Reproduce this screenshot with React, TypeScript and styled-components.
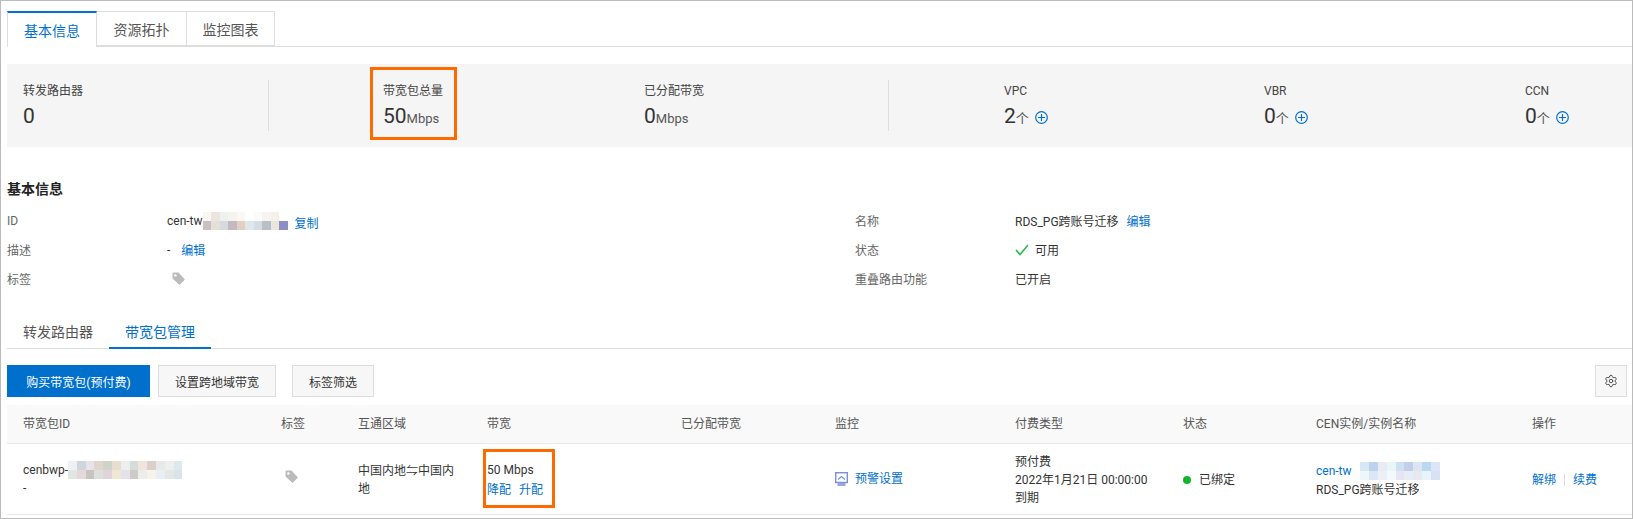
import React from "react";
import styled, { createGlobalStyle } from "styled-components";
import { Settings } from "lucide-react";

const GlobalStyle = createGlobalStyle`
  html, body { margin: 0; padding: 0; background: #fff; }
  body {
    font-family: Roboto, "Noto Sans CJK SC", sans-serif;
    font-size: 12px;
    color: #333;
  }
  * { box-sizing: border-box; }
`;

const Page = styled.div`
  width: 1633px;
  height: 519px;
  overflow: hidden;
  padding: 10px 0 0 6px;
  border: 1px solid #bbb;
`;

const TopTabs = styled.div`
  display: flex;
  height: 36px;
  border-bottom: 1px solid #ddd;
`;

const TopTab = styled.div<{ $active?: boolean; $w: number }>`
  width: ${(p) => p.$w}px;
  height: ${(p) => (p.$active ? 36 : 35)}px;
  display: flex;
  align-items: center;
  justify-content: center;
  font-size: 14px;
  color: ${(p) => (p.$active ? "#0070cc" : "#555")};
  background: #fff;
  border: 1px solid #ddd;
  border-left: ${(p) => (p.$active ? "1px solid #ddd" : "none")};
  border-top: ${(p) => (p.$active ? "2px solid #0070cc" : "1px solid #ddd")};
  border-bottom: ${(p) => (p.$active ? "none" : "1px solid #ddd")};
`;

const StatsPanel = styled.div`
  margin-top: 17px;
  height: 83px;
  background: #f5f5f5;
  display: flex;
  align-items: center;
`;

const StatGroup = styled.div<{ $w: number; $pad: number; $divider?: boolean }>`
  width: ${(p) => p.$w}px;
  height: 51px;
  padding-left: ${(p) => p.$pad}px;
  display: flex;
  border-right: ${(p) => (p.$divider ? "1px solid #ddd" : "none")};
`;

const Stat = styled.div<{ $w: number }>`
  position: relative;
  width: ${(p) => p.$w}px;
  display: flex;
  flex-direction: column;
`;

const StatLabel = styled.div`
  height: 20px;
  margin-top: 1px;
  line-height: 20px;
  color: #444;
`;

const StatValue = styled.div`
  display: flex;
  align-items: baseline;
  height: 28px;
  margin-top: 1px;
  font-size: 21px;
  line-height: 28px;
  color: #333;
`;

const StatUnit = styled.span`
  font-size: 13px;
  color: #555;
`;

const PlusIcon = styled.svg`
  align-self: center;
  margin: 3px 0 0 6px;
`;

const Highlight = styled.div<{ $l: number; $t: number; $w: number; $h: number }>`
  position: absolute;
  left: ${(p) => p.$l}px;
  top: ${(p) => p.$t}px;
  width: ${(p) => p.$w}px;
  height: ${(p) => p.$h}px;
  border: 3px solid #ff6a00;
  pointer-events: none;
`;

const SectionTitle = styled.div`
  margin-top: 32px;
  font-size: 14px;
  font-weight: 700;
  line-height: 20px;
  color: #222;
`;

const InfoGrid = styled.div`
  margin-top: 7px;
  display: grid;
  grid-template-columns: 848px 1fr;
  grid-auto-rows: 29px;
`;

const InfoItem = styled.div`
  display: flex;
  align-items: center;
`;

const InfoLabel = styled.div`
  width: 160px;
  color: #666;
`;

const InfoValue = styled.div<{ $pad?: number }>`
  display: flex;
  align-items: center;
  padding-left: ${(p) => p.$pad ?? 0}px;
  color: #333;
`;

const Link = styled.a<{ $ml?: number; $drop?: number }>`
  color: #0070cc;
  cursor: pointer;
  margin-left: ${(p) => p.$ml ?? 0}px;
  margin-top: ${(p) => p.$drop ?? 0}px;
`;

const Mosaic = styled.div<{ $cols: number; $cell: number; $ml?: number }>`
  display: inline-grid;
  grid-template-columns: repeat(${(p) => p.$cols}, ${(p) => p.$cell}px);
  grid-auto-rows: 9px;
  margin-left: ${(p) => p.$ml ?? 0}px;
`;

const MosaicCell = styled.div<{ $c: string }>`
  background: ${(p) => p.$c};
`;

const SubTabs = styled.div`
  margin-top: 21px;
  height: 35px;
  display: flex;
  border-bottom: 1px solid #ddd;
`;

const SubTab = styled.div<{ $active?: boolean; $w: number }>`
  width: ${(p) => p.$w}px;
  height: 35px;
  padding-bottom: ${(p) => (p.$active ? 0 : 2)}px;
  display: flex;
  align-items: center;
  justify-content: center;
  font-size: 14px;
  color: ${(p) => (p.$active ? "#0070cc" : "#555")};
  border-bottom: ${(p) => (p.$active ? "2px solid #0070cc" : "none")};
`;

const Toolbar = styled.div`
  margin-top: 16px;
  display: flex;
  align-items: center;
  padding-right: 5px;
`;

const Button = styled.button<{ $primary?: boolean; $w: number; $ml?: number }>`
  width: ${(p) => p.$w}px;
  height: 32px;
  margin-left: ${(p) => p.$ml ?? 0}px;
  padding: 0;
  display: flex;
  align-items: center;
  justify-content: center;
  font: inherit;
  color: ${(p) => (p.$primary ? "#fff" : "#333")};
  background: ${(p) => (p.$primary ? "#0070cc" : "#f7f7f7")};
  border: 1px solid ${(p) => (p.$primary ? "#0070cc" : "#ddd")};
`;

const Spacer = styled.div`
  flex: 1;
`;

const COLUMNS = "258px 77px 129px 194px 154px 180px 168px 133px 216px 1fr";

const TableHead = styled.div`
  margin-top: 8px;
  height: 39px;
  display: grid;
  grid-template-columns: ${COLUMNS};
  align-items: center;
  background: #f9f9f9;
  border-bottom: 1px solid #e8e8e8;
  color: #555;
`;

const TableRow = styled.div`
  height: 71px;
  display: grid;
  grid-template-columns: ${COLUMNS};
  align-items: center;
  border-bottom: 1px solid #e8e8e8;
`;

const Cell = styled.div<{ $drop?: number; $pad?: number }>`
  position: relative;
  padding-left: ${(p) => p.$pad ?? 16}px;
  padding-top: ${(p) => p.$drop ?? 0}px;
  line-height: 18px;
`;

const InlineRow = styled.div<{ $gapBelow?: number; $gapAbove?: number }>`
  display: flex;
  align-items: center;
  margin-top: ${(p) => p.$gapAbove ?? 0}px;
  margin-bottom: ${(p) => p.$gapBelow ?? 0}px;
`;

const StatusDot = styled.span`
  width: 8px;
  height: 8px;
  margin-right: 8px;
  border-radius: 50%;
  background: #12b52f;
`;

const OpDivider = styled.span`
  width: 1px;
  height: 12px;
  margin: 0 8px;
  background: #ddd;
`;

const TagIcon = () => (
  <svg width="13" height="13" viewBox="0 0 13 13">
    <path
      d="M0.5 1.5 Q0.5 0.5 1.5 0.5 L6.5 0.5 L12.5 7 Q13 7.6 12.5 8.1 L8 12.5 Q7.5 13 7 12.5 L0.5 6.5 Z"
      fill="#bbb"
    />
    <circle cx="3.4" cy="3.4" r="1.2" fill="#fff" />
  </svg>
);

const Plus = () => (
  <PlusIcon width="13" height="13" viewBox="0 0 13 13" fill="none" stroke="#0070cc" strokeWidth="1.2">
    <circle cx="6.5" cy="6.5" r="5.8" />
    <path d="M6.5 3v7M3 6.5h7" />
  </PlusIcon>
);

const CheckIcon = () => (
  <svg width="14" height="12" viewBox="0 0 14 12" fill="none" stroke="#1fb84a" strokeWidth="1.5" style={{ marginRight: 6 }}>
    <path d="M1 6l4 4.5L13 1" />
  </svg>
);

const MonitorIcon = () => (
  <svg width="13" height="14" viewBox="0 0 13 14" fill="none" style={{ marginRight: 7 }}>
    <rect x="0.7" y="0.7" width="11.6" height="9.8" fill="#fff" stroke="#7a8fd6" strokeWidth="1.4" />
    <path d="M3 7.5l3.5-3L10 7.5" stroke="#7a8fd6" strokeWidth="1.2" />
    <rect x="2.5" y="11" width="8" height="3" fill="#98a8de" />
  </svg>
);

const idMosaic = [
  "#f9f5f3", "#ece4df", "#eef1f0", "#f5f3ef", "#fbf7f5", "#ffffff", "#fafafd", "#f7f3f0", "#f3f1ea", "#ffffff",
  "#ccbfc0", "#e3e0d8", "#d3dcda", "#c6b8c0", "#e2d0c1", "#dce8ec", "#d5dde3", "#b8c0c6", "#ece6da", "#8c8fc4",
];
const bwpMosaic = [
  "#edf0f4", "#d0d5db", "#e8e2e9", "#e0d5ca", "#ced4c9", "#e8ded0", "#edefec", "#d5dcda", "#efe5dc", "#d8d0c9", "#e9e9ea", "#edeeee", "#dde8ee",
  "#e0e7e3", "#e3d8da", "#c8c3c0", "#dcdfdc", "#e0d4da", "#efe6d4", "#e4e1ec", "#cdcbc8", "#edeeec", "#f5f3ec", "#e9eef3", "#e4e6e8", "#d8e4e8",
];
const cenMosaic = [
  "#ffffff", "#d8e6f6", "#bcd3ee", "#e8eaf4", "#e8f6f6", "#d0e0f4", "#c4cde9", "#dce6f2", "#b8d8f4", "#dde6f6",
  "#fafcfe", "#eef6fa", "#dde6f4", "#eeeef6", "#f0fafa", "#e6e3f2", "#e8ecf4", "#e8e8f0", "#e8f4fa", "#d8e2f4",
];

const Blur = ({ colors, cols, cell = 9, ml }: { colors: string[]; cols: number; cell?: number; ml?: number }) => (
  <Mosaic $cols={cols} $cell={cell} $ml={ml}>
    {colors.map((c, i) => (
      <MosaicCell key={i} $c={c} />
    ))}
  </Mosaic>
);

const headers = ["带宽包ID", "标签", "互通区域", "带宽", "已分配带宽", "监控", "付费类型", "状态", "CEN实例/实例名称", "操作"];

export default function App() {
  return (
    <>
      <GlobalStyle />
      <Page>
        <TopTabs>
          <TopTab $active $w={90}>基本信息</TopTab>
          <TopTab $w={90}>资源拓扑</TopTab>
          <TopTab $w={88}>监控图表</TopTab>
        </TopTabs>

        <StatsPanel>
          <StatGroup $w={262} $pad={16} $divider>
            <Stat $w={240}>
              <StatLabel>转发路由器</StatLabel>
              <StatValue>0</StatValue>
            </Stat>
          </StatGroup>
          <StatGroup $w={620} $pad={114} $divider>
            <Stat $w={261}>
              <Highlight $l={-13} $t={-13} $w={87} $h={73} />
              <StatLabel>带宽包总量</StatLabel>
              <StatValue>50<StatUnit>Mbps</StatUnit></StatValue>
            </Stat>
            <Stat $w={240}>
              <StatLabel>已分配带宽</StatLabel>
              <StatValue>0<StatUnit>Mbps</StatUnit></StatValue>
            </Stat>
          </StatGroup>
          <StatGroup $w={743} $pad={115}>
            <Stat $w={260}>
              <StatLabel>VPC</StatLabel>
              <StatValue>2<StatUnit>个</StatUnit><Plus /></StatValue>
            </Stat>
            <Stat $w={261}>
              <StatLabel>VBR</StatLabel>
              <StatValue>0<StatUnit>个</StatUnit><Plus /></StatValue>
            </Stat>
            <Stat $w={100}>
              <StatLabel>CCN</StatLabel>
              <StatValue>0<StatUnit>个</StatUnit><Plus /></StatValue>
            </Stat>
          </StatGroup>
        </StatsPanel>

        <SectionTitle>基本信息</SectionTitle>
        <InfoGrid>
          <InfoItem>
            <InfoLabel>ID</InfoLabel>
            <InfoValue>
              cen-tw
              <Blur colors={idMosaic} cols={10} cell={8.5} />
              <Link $ml={7} $drop={4}>复制</Link>
            </InfoValue>
          </InfoItem>
          <InfoItem>
            <InfoLabel>名称</InfoLabel>
            <InfoValue>
              RDS_PG跨账号迁移
              <Link $ml={8}>编辑</Link>
            </InfoValue>
          </InfoItem>
          <InfoItem>
            <InfoLabel>描述</InfoLabel>
            <InfoValue>
              -
              <Link $ml={11}>编辑</Link>
            </InfoValue>
          </InfoItem>
          <InfoItem>
            <InfoLabel>状态</InfoLabel>
            <InfoValue>
              <CheckIcon />
              可用
            </InfoValue>
          </InfoItem>
          <InfoItem>
            <InfoLabel>标签</InfoLabel>
            <InfoValue $pad={5}>
              <TagIcon />
            </InfoValue>
          </InfoItem>
          <InfoItem>
            <InfoLabel>重叠路由功能</InfoLabel>
            <InfoValue>已开启</InfoValue>
          </InfoItem>
        </InfoGrid>

        <SubTabs>
          <SubTab $w={102}>转发路由器</SubTab>
          <SubTab $active $w={102}>带宽包管理</SubTab>
        </SubTabs>

        <Toolbar>
          <Button $primary $w={143}>购买带宽包(预付费)</Button>
          <Button $w={118} $ml={8}>设置跨地域带宽</Button>
          <Button $w={82} $ml={16}>标签筛选</Button>
          <Spacer />
          <Button $w={32}><Settings size={14} strokeWidth={1.6} color="#444" /></Button>
        </Toolbar>

        <TableHead>
          {headers.map((h) => (
            <Cell key={h}>{h}</Cell>
          ))}
        </TableHead>
        <TableRow>
          <Cell>
            <InlineRow>
              cenbwp-
              <Blur colors={bwpMosaic} cols={13} cell={8.8} />
            </InlineRow>
            -
          </Cell>
          <Cell $pad={20}><TagIcon /></Cell>
          <Cell $drop={2}>中国内地⇋中国内<br />地</Cell>
          <Cell $drop={2}>
            <Highlight $l={12} $t={-10} $w={72} $h={59} />
            50 Mbps
            <InlineRow $gapAbove={2}>
              <Link>降配</Link>
              <Link $ml={8}>升配</Link>
            </InlineRow>
          </Cell>
          <Cell />
          <Cell>
            <InlineRow>
              <MonitorIcon />
              <Link>预警设置</Link>
            </InlineRow>
          </Cell>
          <Cell $drop={2}>
            预付费<br />2022年1月21日 00:00:00<br />到期
          </Cell>
          <Cell $drop={2}>
            <InlineRow>
              <StatusDot />
              已绑定
            </InlineRow>
          </Cell>
          <Cell $drop={2}>
            <InlineRow $gapBelow={1}>
              <Link>cen-tw</Link>
              <Blur colors={cenMosaic} cols={10} cell={8.8} />
            </InlineRow>
            RDS_PG跨账号迁移
          </Cell>
          <Cell $drop={2}>
            <InlineRow>
              <Link>解绑</Link>
              <OpDivider />
              <Link>续费</Link>
            </InlineRow>
          </Cell>
        </TableRow>
      </Page>
    </>
  );
}
